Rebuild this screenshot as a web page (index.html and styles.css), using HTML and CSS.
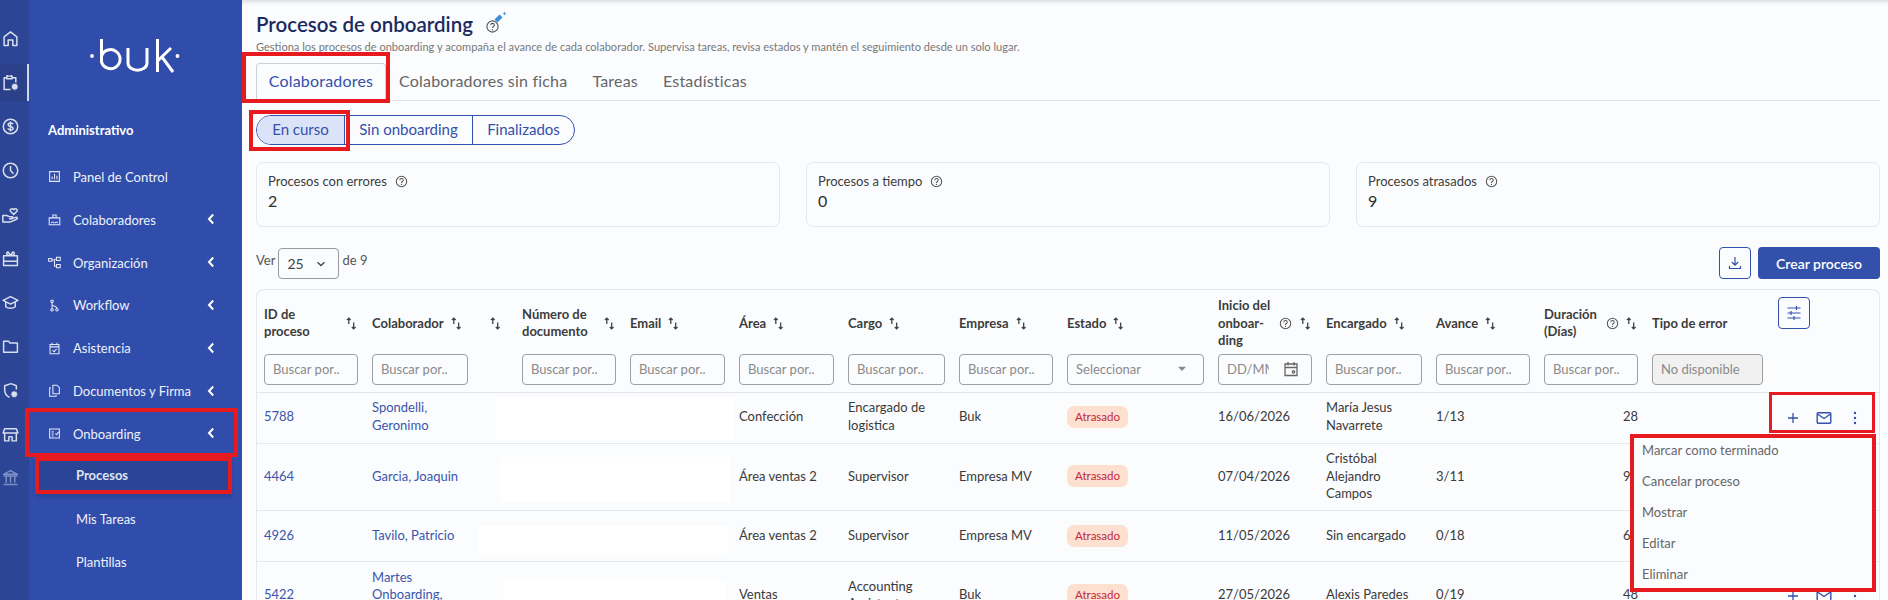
FILE: index.html
```html
<!DOCTYPE html>
<html lang="es">
<head>
<meta charset="utf-8">
<title>Procesos de onboarding</title>
<link rel="stylesheet" href="styles.css">
</head>
<body>
<svg class="defs" width="0" height="0" aria-hidden="true">
  <symbol id="sort" viewBox="0 0 10 12"><path d="M2.500 6.500V1M.8 2.800L2.500 1l1.700 1.800M7 5v6M5.300 9.200L7 11l1.700-1.800" fill="none" stroke="currentColor" stroke-width="1.200"/></symbol>
  <symbol id="help" viewBox="0 0 14 14"><circle cx="7" cy="7" r="5.600" fill="none" stroke="currentColor" stroke-width="1.100"/><path d="M5.200 5.600c0-2.300 3.700-2.300 3.700 0 0 1.400-1.900 1.400-1.900 2.900" fill="none" stroke="currentColor" stroke-width="1.100"/><circle cx="7" cy="10.200" r=".7" fill="currentColor"/></symbol>
  <symbol id="chev" viewBox="0 0 8 12"><path d="M6.200 1.500L2 6l4.200 4.500" fill="none" stroke="currentColor" stroke-width="2"/></symbol>
  <symbol id="plus" viewBox="0 0 16 16"><path d="M8 3v10M3 8h10" fill="none" stroke="currentColor" stroke-width="1.300"/></symbol>
  <symbol id="mail" viewBox="0 0 16 16"><rect x="1.200" y="2.700" width="13.600" height="10.600" rx="1" fill="none" stroke="currentColor" stroke-width="1.400"/><path d="M1.500 4l6.500 4.500L14.500 4" fill="none" stroke="currentColor" stroke-width="1.400"/></symbol>
  <symbol id="dots" viewBox="0 0 16 16"><circle cx="8" cy="3" r="1.200" fill="currentColor"/><circle cx="8" cy="8" r="1.200" fill="currentColor"/><circle cx="8" cy="13" r="1.200" fill="currentColor"/></symbol>
</svg>
<div class="shell">
  <nav class="rail">
    <a class="rail-item"><svg viewBox="0 0 16 16"><path d="M2 14.500V6.500L8 1.800l6 4.700v8h-3.800V9.500H5.800v5z"/></svg></a>
    <a class="rail-item is-active"><svg viewBox="0 0 16 16"><path d="M8 14.500H2V3.500h2.500M9.500 3.500H13V8M5 2V1M9 2V1M4.500 2h5v2.500h-5z"/><circle cx="12" cy="12" r="3.200" class="fill"/></svg></a>
    <a class="rail-item"><svg viewBox="0 0 16 16"><circle cx="8" cy="8" r="6.800"/><path d="M10.500 5.800C9.800 4.400 5.700 4.300 5.700 6.300c0 2.200 4.800 1.300 4.800 3.500 0 2-4.200 1.900-5-.2M8 3.200v9.600"/></svg></a>
    <a class="rail-item"><svg viewBox="0 0 16 16"><circle cx="8" cy="8" r="6.800"/><path d="M8 3.800V8l2.800 3"/></svg></a>
    <a class="rail-item"><svg viewBox="0 0 16 16"><path d="M.8 9h3.500l2.700 1h2.500c1 0 1 2 0 2H7l6-1.300c1.500-.3 2 1.200.7 1.800L8 15H.8zM11 8L8 5C6.700 3.300 9.500 1.600 11 3.500c1.500-1.900 4.300-.2 3 1.500z"/></svg></a>
    <a class="rail-item"><svg viewBox="0 0 16 16"><path d="M1.500 5.500h13v9h-13zM1.500 10.500h13M8 5.500C4 5.500 3.500 1.500 6 2l2 3.500L10 2c2.500-.5 2 3.500-2 3.500z"/></svg></a>
    <a class="rail-item"><svg viewBox="0 0 16 16"><path d="M8 2.500L1 6l7 3.500L15 6zM3.500 8v4c2.500 2 6.500 2 9 0V8"/></svg></a>
    <a class="rail-item"><svg viewBox="0 0 16 16"><path d="M1.500 3h4.700l1.300 1.800h7v8.700h-13z"/></svg></a>
    <a class="rail-item"><svg viewBox="0 0 16 16"><path d="M8.500 1.500l5 2V7M7 14.300C4 13 2.500 10.500 2.500 7V3.500l6-2"/><circle cx="11.500" cy="11.500" r="3.200" class="fill"/></svg></a>
    <a class="rail-item"><svg viewBox="0 0 16 16"><path d="M2.500 2.500h11L15 6.500H1zM2.500 7v7h4v-4h3v4h4V7"/></svg></a>
    <a class="rail-item is-dim"><svg viewBox="0 0 16 16"><path d="M8 1.500L1.500 5h13zM1.500 14.500h13M1.500 6.500h13M4 7v6M8 7v6M12 7v6"/></svg></a>
  </nav>
  <aside class="sidebar">
    <div class="logo">
      <svg viewBox="0 0 90 36" width="90" height="36" role="img" aria-label="buk">
        <circle cx="2" cy="18" r="1.900" class="logo-dot"/>
        <path d="M11.500 1v23a9.500 9.500 0 1 0 .1-6" class="logo-line"/>
        <path d="M38 10v15c0 9.500 19 9.500 19 0V10" class="logo-line"/>
        <path d="M67.500 1v33M67.500 23L81 10M72 19l11 15" class="logo-line"/>
        <circle cx="87.500" cy="18" r="1.900" class="logo-dot"/>
      </svg>
    </div>
    <div class="side-title">Administrativo</div>
    <ul class="side-list">
      <li class="side-item"><svg class="side-icon" viewBox="0 0 16 16"><path d="M2 2h12v12H2zM5 11.500V8M8 11.500V4.500M11 11.500V7"/></svg><span>Panel de Control</span></li>
      <li class="side-item"><svg class="side-icon" viewBox="0 0 16 16"><path d="M1.500 6h13v8.500h-13zM6 2.500h4V6H6zM4 12.500c.5-2 3-2 3.500 0M8.500 12.500c.5-2 3-2 3.500 0"/></svg><span>Colaboradores</span><svg class="chev"><use href="#chev"/></svg></li>
      <li class="side-item"><svg class="side-icon" viewBox="0 0 16 16"><path d="M.8 3h4v3.500h-4zM10.500 1.500h4.500v4h-4.500zM10.500 10.500h4.500v4h-4.500zM4.800 5H8v7.500h2.500M8 4h2.500"/></svg><span>Organización</span><svg class="chev"><use href="#chev"/></svg></li>
      <li class="side-item"><svg class="side-icon" viewBox="0 0 16 16"><path d="M5 4v7.500M5 7c0 2 6 1 6 4.500"/><circle cx="5" cy="2.800" r="1.500"/><circle cx="5" cy="13.200" r="1.500"/><circle cx="11" cy="13.200" r="1.500"/></svg><span>Workflow</span><svg class="chev"><use href="#chev"/></svg></li>
      <li class="side-item"><svg class="side-icon" viewBox="0 0 16 16"><path d="M2.500 3h11v11.500h-11zM2.500 6h11M5 1V4M11 1V4M5.500 10l2 2 3-3.500"/></svg><span>Asistencia</span><svg class="chev"><use href="#chev"/></svg></li>
      <li class="side-item"><svg class="side-icon" viewBox="0 0 16 16"><path d="M6 1.500h5l3 3V12H6zM3.500 4.500H2V15h8v-1.500"/></svg><span>Documentos y Firma</span><svg class="chev"><use href="#chev"/></svg></li>
      <li class="side-item"><svg class="side-icon" viewBox="0 0 16 16"><path d="M2 2.500h12v11H2zM4.500 6H7M4.500 8.500H7M4.500 11H7M9 8l1.500 1.500L13 6"/></svg><span>Onboarding</span><svg class="chev"><use href="#chev"/></svg></li>
      <li class="side-sub is-current">Procesos</li>
      <li class="side-sub">Mis Tareas</li>
      <li class="side-sub">Plantillas</li>
    </ul>
  </aside>
  <main class="main">
    <div class="title-row">
      <h1 class="title">Procesos de onboarding</h1>
      <svg class="title-icon" viewBox="0 0 22 22"><use href="#help" x="0.500" y="8.500" width="14" height="14" class="help-grey"/><path d="M9.500 8.500L14.500 3.500l3 3-5 5z" class="wand"/><path d="M19.500 .5l.6 1.400 1.400.6-1.400.6-.6 1.400-.6-1.400-1.400-.6 1.400-.6z" class="wand"/></svg>
    </div>
    <p class="subtitle">Gestiona los procesos de onboarding y acompaña el avance de cada colaborador. Supervisa tareas, revisa estados y mantén el seguimiento desde un solo lugar.</p>
    <div class="tabs">
      <a class="tab is-active">Colaboradores</a>
      <a class="tab">Colaboradores sin ficha</a>
      <a class="tab">Tareas</a>
      <a class="tab">Estadísticas</a>
    </div>
    <div class="pills">
      <a class="pill is-active">En curso</a>
      <a class="pill">Sin onboarding</a>
      <a class="pill">Finalizados</a>
    </div>
    <div class="cards">
      <div class="card"><div class="card-label">Procesos con errores <svg class="help"><use href="#help"/></svg></div><div class="card-value">2</div></div>
      <div class="card"><div class="card-label">Procesos a tiempo <svg class="help"><use href="#help"/></svg></div><div class="card-value">0</div></div>
      <div class="card"><div class="card-label">Procesos atrasados <svg class="help"><use href="#help"/></svg></div><div class="card-value">9</div></div>
    </div>
    <div class="toolbar">
      <div class="pager">
        <span>Ver</span>
        <div class="page-select"><span>25</span><svg viewBox="0 0 10 6"><path d="M1.500 1.200L5 4.500l3.500-3.300"/></svg></div>
        <span>de 9</span>
      </div>
      <div class="toolbar-actions">
        <button class="icon-btn"><svg viewBox="0 0 16 16"><path d="M8 2v8M4.800 7L8 10.200 11.200 7M2.500 11v2.500h11V11"/></svg></button>
        <button class="primary-btn">Crear proceso</button>
      </div>
    </div>
    <div class="table-card">
      <table class="table">
        <colgroup>
          <col class="c108"><col class="c110"><col class="c40"><col class="c108"><col class="c109"><col class="c109"><col class="c111"><col class="c108"><col class="c151"><col class="c108"><col class="c110"><col class="c108"><col class="c108"><col class="c125"><col class="c109">
        </colgroup>
        <thead>
          <tr class="head-row">
            <th><div class="th spread"><span>ID de<br>proceso</span><svg class="sort"><use href="#sort"/></svg></div></th>
            <th><div class="th"><span>Colaborador</span><svg class="sort"><use href="#sort"/></svg></div></th>
            <th><div class="th center"><svg class="sort"><use href="#sort"/></svg></div></th>
            <th><div class="th spread"><span>Número de<br>documento</span><svg class="sort"><use href="#sort"/></svg></div></th>
            <th><div class="th"><span>Email</span><svg class="sort"><use href="#sort"/></svg></div></th>
            <th><div class="th"><span>Área</span><svg class="sort"><use href="#sort"/></svg></div></th>
            <th><div class="th"><span>Cargo</span><svg class="sort"><use href="#sort"/></svg></div></th>
            <th><div class="th"><span>Empresa</span><svg class="sort"><use href="#sort"/></svg></div></th>
            <th><div class="th"><span>Estado</span><svg class="sort"><use href="#sort"/></svg></div></th>
            <th><div class="th spread"><span>Inicio del<br>onboar-<br>ding</span><svg class="help push"><use href="#help"/></svg><svg class="sort"><use href="#sort"/></svg></div></th>
            <th><div class="th"><span>Encargado</span><svg class="sort"><use href="#sort"/></svg></div></th>
            <th><div class="th"><span>Avance</span><svg class="sort"><use href="#sort"/></svg></div></th>
            <th><div class="th spread"><span>Duración<br>(Días)</span><svg class="help push"><use href="#help"/></svg><svg class="sort"><use href="#sort"/></svg></div></th>
            <th><div class="th"><span>Tipo de error</span></div></th>
            <th class="th-settings"><button class="icon-btn"><svg class="settings-icon" viewBox="0 0 16 16"><path d="M1.500 3h13M1.500 8h13M1.500 13h13M10.500 1v4M5 6v4M8 11v4"/></svg></button></th>
          </tr>
          <tr class="filter-row">
            <th><input class="field" placeholder="Buscar por.."></th>
            <th><input class="field" placeholder="Buscar por.."></th>
            <th></th>
            <th><input class="field" placeholder="Buscar por.."></th>
            <th><input class="field" placeholder="Buscar por.."></th>
            <th><input class="field" placeholder="Buscar por.."></th>
            <th><input class="field" placeholder="Buscar por.."></th>
            <th><input class="field" placeholder="Buscar por.."></th>
            <th><div class="field field-select"><span>Seleccionar</span><svg viewBox="0 0 10 6"><path d="M1 .800h8L5 5z"/></svg></div></th>
            <th><div class="field field-select"><span class="clip">DD/MM/AAAA</span><svg class="cal" viewBox="0 0 16 16"><path d="M2 3h12v11.500H2zM2 6.500h12M5 1v3.500M11 1v3.500"/><circle cx="10.500" cy="10.800" r="1.200"/></svg></div></th>
            <th><input class="field" placeholder="Buscar por.."></th>
            <th><input class="field" placeholder="Buscar por.."></th>
            <th><input class="field" placeholder="Buscar por.."></th>
            <th><input class="field is-disabled" placeholder="No disponible" disabled></th>
            <th></th>
          </tr>
        </thead>
        <tbody>
          <tr>
            <td><a class="link">5788</a></td><td><a class="link">Spondelli, Geronimo</a></td><td></td><td></td><td></td>
            <td>Confección</td><td>Encargado de logistica</td><td>Buk</td><td><span class="badge">Atrasado</span></td><td>16/06/2026</td><td>María Jesus Navarrete</td><td>1/13</td><td class="num">28</td><td></td>
            <td><div class="row-actions"><svg><use href="#plus"/></svg><svg><use href="#mail"/></svg><svg><use href="#dots"/></svg></div></td>
          </tr>
          <tr>
            <td><a class="link">4464</a></td><td><a class="link">Garcia, Joaquin</a></td><td></td><td></td><td></td>
            <td>Área ventas 2</td><td>Supervisor</td><td>Empresa MV</td><td><span class="badge">Atrasado</span></td><td>07/04/2026</td><td>Cristóbal Alejandro Campos</td><td>3/11</td><td class="num">98</td><td></td>
            <td></td>
          </tr>
          <tr>
            <td><a class="link">4926</a></td><td><a class="link nowrap">Tavilo, Patricio</a></td><td></td><td></td><td></td>
            <td>Área ventas 2</td><td>Supervisor</td><td>Empresa MV</td><td><span class="badge">Atrasado</span></td><td>11/05/2026</td><td>Sin encargado</td><td>0/18</td><td class="num">64</td><td></td>
            <td></td>
          </tr>
          <tr>
            <td><a class="link">5422</a></td><td><a class="link">Martes Onboarding, Prueba</a></td><td></td><td></td><td></td>
            <td>Ventas</td><td>Accounting Assistant</td><td>Buk</td><td><span class="badge">Atrasado</span></td><td>27/05/2026</td><td>Alexis Paredes</td><td>0/19</td><td class="num">48</td><td></td>
            <td><div class="row-actions"><svg><use href="#plus"/></svg><svg><use href="#mail"/></svg><svg><use href="#dots"/></svg></div></td>
          </tr>
        </tbody>
      </table>
      <div class="mask mask-1"></div>
      <div class="mask mask-2"></div>
      <div class="mask mask-3"></div>
      <div class="mask mask-4"></div>
    </div>
  </main>
  <ul class="menu">
    <li>Marcar como terminado</li>
    <li>Cancelar proceso</li>
    <li>Mostrar</li>
    <li>Editar</li>
    <li>Eliminar</li>
  </ul>
  <div class="mark mark-tab"></div>
  <div class="mark mark-pill"></div>
  <div class="mark mark-onboarding"></div>
  <div class="mark mark-procesos"></div>
  <div class="mark mark-actions"></div>
  <div class="mark mark-menu"></div>
</div>
</body>
</html>
```

FILE: styles.css
```css
* { box-sizing: border-box; }
html, body { margin: 0; height: 600px; overflow: hidden; }
body { font-family: "Lato", "Noto Sans", sans-serif; font-size: 13px; color: #3a3a3a; background: #fbfcfe; }
.defs { position: absolute; }
ul { list-style: none; margin: 0; padding: 0; }
.shell { position: relative; display: flex; width: 1888px; height: 600px; overflow: hidden; }

/* rail */
.rail { flex: 0 0 29px; background: #2c4594; padding-top: 17px; display: flex; flex-direction: column; }
.rail-item { flex: 0 0 43.900px; display: flex; align-items: center; padding-left: 1.500px; }
.rail-item svg { width: 17px; height: 17px; fill: none; stroke: #d9dff0; stroke-width: 1.400; stroke-linejoin: round; }
.rail-item svg .fill { fill: #d9dff0; stroke: #2c4594; stroke-width: .8; }
.rail-item.is-active { background: #2a4089; border-right: 2px solid #cfd6ea; height: 37px; flex-basis: 37px; margin: 3.500px 0; }
.rail-item.is-dim svg { stroke: #7c8fc8; }

/* sidebar */
.sidebar { flex: 0 0 213px; background: #304dab; color: #eef1fa; }
.logo { height: 110px; padding: 38px 0 0 61px; }
.logo-line { fill: none; stroke: #fff; stroke-width: 3; }
.logo-dot { fill: #fff; }
.side-title { margin: 10px 0 0 19px; height: 20px; line-height: 20px; font-weight: 700; font-size: 13px; color: #fff; }
.side-list { margin-top: 15.600px; }
.side-item { position: relative; display: flex; align-items: center; height: 42.800px; padding-left: 19px; font-size: 13px; }
.side-icon { width: 13px; height: 13px; margin-right: 12px; fill: none; stroke: #e4e8f6; stroke-width: 1.300; flex: none; }
.side-item .chev { position: absolute; left: 178px; top: 15px; width: 8px; height: 12px; color: #fff; }
.side-sub { height: 42.800px; line-height: 42.800px; padding-left: 47px; font-size: 13px; }
.side-sub.is-current { background: #2b4596; box-shadow: 0 3px 3px rgba(30,45,100,.25); height: 37px; line-height: 37px; margin: 2px 10px 3.800px 6px; padding-left: 41px; font-weight: 700; color: #dfe4f3; }

/* main */
.main { flex: 1; min-width: 0; padding: 12px 8px 0 14px; box-shadow: inset 0 6px 5px -5px rgba(40,50,80,.22); }
.title-row { display: flex; align-items: center; height: 24px; gap: 12px; }
.title { margin: 0; font-size: 20.500px; font-weight: 600; color: #1b2a5e; line-height: 24px; }
.title-icon { width: 22px; height: 22px; margin-top: -4px; overflow: visible; }
.help-grey { color: #555; }
.wand { fill: #3a8ee0; }
.subtitle { margin: 4px 0 0; font-size: 11.050px; line-height: 14px; color: #787878; height: 14px; white-space: nowrap; }
.tabs { display: flex; margin-top: 9px; height: 38px; border-bottom: 1px solid #e3e5ea; font-size: 16px; letter-spacing: .2px; color: #666; }
.tab { display: flex; align-items: center; padding: 0 12px 3px; margin-right: 1px; height: 38px; }
.tab.is-active { border: 1px solid #ccd0d8; border-bottom-color: #fbfcfe; border-radius: 4px 4px 0 0; color: #3350ab; width: 130px; justify-content: center; padding: 0 0 3px; }
.pills { display: flex; width: 319px; margin-top: 14px; height: 30px; border: 1px solid #3350ab; border-radius: 15px; overflow: hidden; font-size: 15px; color: #3350ab; }
.pill { display: flex; align-items: center; justify-content: center; padding-bottom: 2px; border-left: 1px solid #3350ab; }
.pill:nth-child(1) { width: 87px; border-left: 0; background: #dbe3f8; }
.pill:nth-child(2) { width: 128px; }
.pill:nth-child(3) { width: 102px; }
.cards { display: grid; grid-template-columns: repeat(3, 1fr); gap: 26px; margin-top: 17px; }
.card { height: 65px; border: 1px solid #e6e8ec; border-radius: 7px; padding: 9px 11px; }
.card-label { display: flex; align-items: center; gap: 8px; height: 18px; font-size: 13px; color: #3c3c3c; }
.card-value { font-size: 16px; line-height: 22px; color: #2d2d2d; }
.help { width: 13px; height: 13px; color: #555; flex: none; }
.toolbar { display: flex; align-items: flex-start; justify-content: space-between; margin-top: 20px; height: 32px; }
.pager { display: flex; gap: 3px; color: #555; line-height: 26px; font-size: 13px; }
.page-select { display: flex; align-items: center; justify-content: space-between; width: 61px; height: 31px; padding: 0 12px 0 8px; margin-top: 1px; border: 1px solid #9a9a9a; border-radius: 4px; font-size: 14px; color: #444; line-height: 30px; }
.page-select svg { width: 10px; height: 6px; fill: none; stroke: #444; stroke-width: 1.300; }
.toolbar-actions { display: flex; gap: 7px; }
.icon-btn { display: flex; align-items: center; justify-content: center; width: 32px; height: 32px; padding: 0; border: 1px solid #3350ab; border-radius: 4px; background: #fbfcfe; color: #3350ab; }
.icon-btn svg { width: 16px; height: 16px; fill: none; stroke: #3350ab; stroke-width: 1.200; }
.primary-btn { width: 122px; height: 32px; border: 0; border-radius: 4px; background: #3350ab; color: #fff; font: 600 14px "Lato", "Noto Sans", sans-serif; }

/* table */
.table-card { position: relative; margin-top: 10px; border: 1px solid #e6e8ec; border-bottom: 0; border-radius: 8px 8px 0 0; }
.table { width: 100%; table-layout: fixed; border-collapse: separate; border-spacing: 0; }
.c40 { width: 40px; } .c108 { width: 108px; } .c109 { width: 109px; } .c110 { width: 110px; } .c111 { width: 111px; } .c125 { width: 125px; } .c151 { width: 151px; }
th { padding: 0 7px; font-weight: 700; text-align: left; vertical-align: middle; }
.head-row th { height: 59px; padding-top: 7px; line-height: 17.500px; color: #3c3c3c; }
.th { display: flex; align-items: center; gap: 7px; white-space: nowrap; }
.th.spread .sort { margin-left: auto; margin-right: 1px; }
.th.center { justify-content: center; }
.th .push { margin-left: 2px; }
.sort { width: 11px; height: 13px; color: #444; flex: none; }
.head-row .th-settings { vertical-align: top; padding-left: 8px; }
.settings-icon { stroke-width: 1.100; }
.filter-row th { height: 43px; padding: 4px 7px 7px; border-bottom: 1px solid #e3e5ea; }
.field { display: flex; align-items: center; width: 100%; height: 31px; padding: 0 8px; border: 1px solid #a0a0a0; border-radius: 4px; background: transparent; font: 400 13px "Lato", "Noto Sans", sans-serif; color: #8a8a8a; }
.field::placeholder { color: #8a8a8a; opacity: 1; }
.field.is-disabled { background: #f1f1f1; }
.field-select { justify-content: space-between; }
.field-select svg { width: 10px; height: 6px; fill: #8a8a8a; flex: none; margin-right: 8px; }
.field-select .clip { display: block; width: 42px; overflow: hidden; white-space: nowrap; }
.field-select .cal { width: 16px; height: 16px; fill: none; stroke: #666; stroke-width: 1.300; margin-right: 4px; }
td { height: 51px; padding: 6.500px 7px 7.500px; line-height: 17.600px; font-size: 13px; color: #3a3a3a; border-bottom: 1px solid #e6e8ec; vertical-align: middle; }
.link { color: #3a55ad; }
.nowrap { white-space: nowrap; }
.num { text-align: right; }
.badge { display: inline-block; height: 22px; width: 61px; line-height: 21px; text-align: center; border-radius: 7px; background: #fde0cf; color: #c2283c; font-size: 11.500px; }
.row-actions { display: flex; gap: 15px; padding: 2px 0 0 8px; color: #3350ab; }
.row-actions svg { width: 16px; height: 16px; flex: none; }
.mask { position: absolute; background: #fff; }
.mask-1 { left: 239px; width: 239px; top: 107px; height: 43px; }
.mask-2 { left: 243px; width: 230px; top: 167px; height: 45px; }
.mask-3 { left: 221px; width: 250px; top: 236px; height: 29px; }
.mask-4 { left: 247px; width: 222px; top: 290px; height: 40px; }

/* dropdown */
.menu { position: absolute; left: 1633px; top: 437px; width: 240px; height: 152px; padding: 0 9px; background: #fbfcfe; color: #666; font-size: 13px; }
.menu li { height: 31px; line-height: 27px; }

/* annotations */
.mark { position: absolute; border: 4px solid #e71b1f; }
.mark-tab { left: 242px; top: 52px; width: 148px; height: 51px; }
.mark-pill { left: 249px; top: 110px; width: 101px; height: 41px; }
.mark-onboarding { left: 25px; top: 408px; width: 213px; height: 49px; }
.mark-procesos { left: 35px; top: 457px; width: 197px; height: 37px; }
.mark-actions { left: 1769px; top: 392px; width: 106px; height: 41px; border-width: 3px; }
.mark-menu { left: 1630px; top: 434px; width: 246px; height: 158px; }
```
